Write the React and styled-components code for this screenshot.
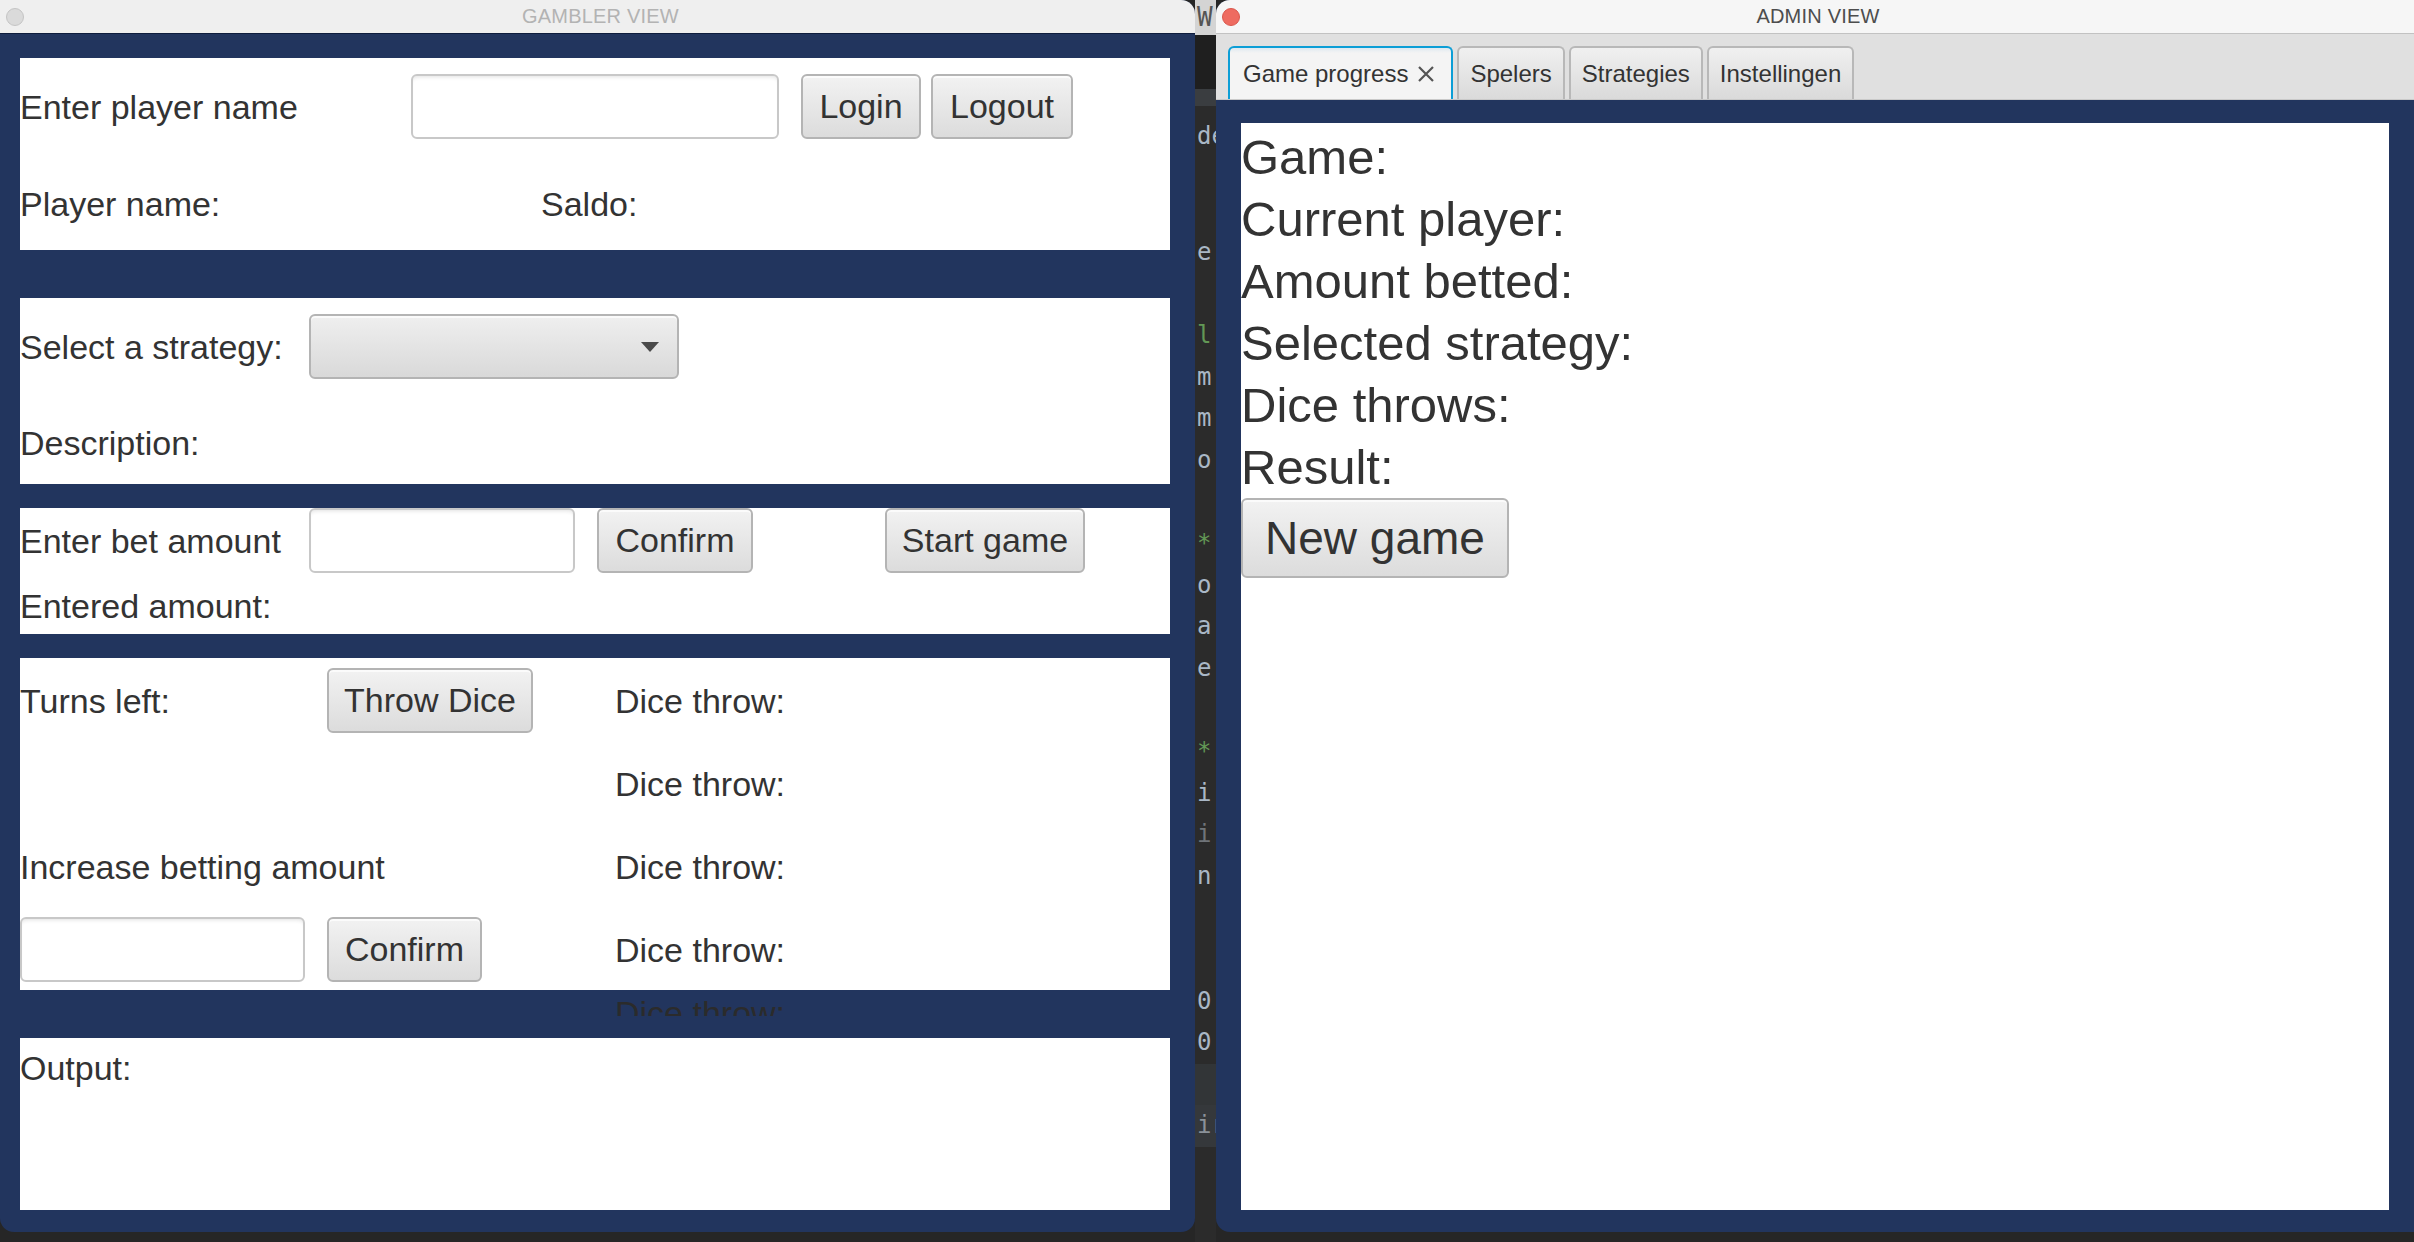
import styled, { createGlobalStyle } from "styled-components";

const NAVY = "#22355e";

const GlobalStyle = createGlobalStyle`
  html, body {
    margin: 0;
    padding: 0;
    background: #2b2b2b;
    overflow: hidden;
  }
  * {
    box-sizing: border-box;
  }
`;

const Screen = styled.div`
  display: flex;
  align-items: flex-start;
  width: 2414px;
  height: 1242px;
  background: #262626;
  font-family: "Liberation Sans", Arial, sans-serif;
  color: #333;
`;

const Window = styled.div`
  display: flex;
  flex-direction: column;
  height: 1232px;
  background: ${NAVY};
  overflow: hidden;
  flex: ${({ $grow }) => ($grow ? "1" : "0 0 1195px")};
  border-radius: ${({ $grow }) => ($grow ? "14px 0 0 14px" : "0 14px 14px 14px")};
`;

const TitleBar = styled.div`
  display: grid;
  grid-template-columns: 1fr auto 1fr;
  align-items: center;
  height: 34px;
  padding-left: 6px;
  flex-shrink: 0;
  background: ${({ $active }) => ($active ? "#f6f6f6" : "#efefef")};
  border-bottom: 1px solid ${({ $active }) => ($active ? "#c2c2c2" : "#0f1d3d")};
`;

const Light = styled.span`
  width: 18px;
  height: 18px;
  border-radius: 50%;
  justify-self: start;
  background: ${({ $active }) => ($active ? "#ee6b60" : "#dadada")};
  border: 1px solid ${({ $active }) => ($active ? "#d9574c" : "#c4c4c4")};
`;

const Title = styled.span`
  font-size: 20px;
  letter-spacing: 0.2px;
  color: ${({ $active }) => ($active ? "#4d4d4d" : "#b3b3b3")};
`;

/* ---------- gambler side ---------- */

const GamblerBody = styled.div`
  display: flex;
  flex-direction: column;
  padding: 24px 25px 22px 20px;
`;

const Panel = styled.div`
  background: #fff;
  height: ${({ $h }) => $h}px;
  padding-top: ${({ $pt }) => $pt || 0}px;
  margin-bottom: ${({ $mb }) => $mb || 0}px;
`;

const Row = styled.div`
  display: flex;
  align-items: center;
  height: ${({ $h }) => $h || 65}px;
  margin-top: ${({ $mt }) => $mt || 0}px;
`;

const Label = styled.span`
  font-size: 34px;
  line-height: 40px;
  white-space: nowrap;
  flex-shrink: 0;
  width: ${({ $w }) => ($w ? `${$w}px` : "auto")};
`;

const TextField = styled.div`
  width: ${({ $w }) => $w}px;
  height: 65px;
  flex-shrink: 0;
  background: #fff;
  border: 2px solid #c8c8c8;
  border-radius: 6px;
  box-shadow: inset 0 4px 4px -3px rgba(0, 0, 0, 0.12);
`;

const Button = styled.button`
  width: ${({ $w }) => $w}px;
  height: ${({ $hgt }) => $hgt || 65}px;
  margin-left: ${({ $ml }) => $ml || 0}px;
  flex-shrink: 0;
  padding: 0;
  font-family: "Liberation Sans", Arial, sans-serif;
  font-size: ${({ $fs }) => $fs || 34}px;
  color: #333;
  background: linear-gradient(#f2f2f2, #dcdcdc);
  border: 2px solid #b4b4b4;
  border-radius: 6px;
  box-shadow: inset 0 2px 0 rgba(255, 255, 255, 0.7);
`;

const Combo = styled.div`
  display: flex;
  align-items: center;
  justify-content: flex-end;
  width: 370px;
  height: 65px;
  padding-right: 18px;
  background: linear-gradient(#efefef, #d9d9d9);
  border: 2px solid #b4b4b4;
  border-radius: 6px;
  box-shadow: inset 0 2px 0 rgba(255, 255, 255, 0.7);
`;

const Arrow = styled.span`
  width: 0;
  height: 0;
  border-left: 9px solid transparent;
  border-right: 9px solid transparent;
  border-top: 10px solid #4a4a4a;
`;

const DiceGrid = styled.div`
  display: grid;
  grid-template-columns: 307px 288px 1fr;
  grid-template-rows: repeat(4, 65px);
  row-gap: 18px;
  align-items: center;
  justify-items: start;
`;

const Span2 = styled(Label)`
  grid-column: 1 / 3;
`;

const GapLine = styled.div`
  height: 48px;
`;

const Clipped = styled.div`
  margin-left: 595px;
  height: 26px;
  padding-top: 3px;
  overflow: hidden;
  font-size: 34px;
  line-height: 40px;
  color: #2b2b2b;
`;

/* ---------- editor strip between windows ---------- */

const Strip = styled.div`
  flex: 0 0 21px;
  height: 1242px;
  display: flex;
  flex-direction: column;
  background: #2b2b2b;
  overflow: hidden;
  font-family: "DejaVu Sans Mono", "Liberation Mono", monospace;
  font-size: 24px;
`;

const StripTop = styled.div`
  height: 35px;
  padding-left: 2px;
  background: #d4d4d4;
  color: #555;
  line-height: 35px;
  font-size: 26px;
`;

const StripBand = styled.div`
  height: ${({ $h }) => $h}px;
  background: ${({ $bg }) => $bg};
`;

const CodeLine = styled.div`
  height: ${({ $h }) => $h || 41.6}px;
  line-height: ${({ $h }) => $h || 41.6}px;
  padding-left: 2px;
  white-space: nowrap;
  color: ${({ $c }) => $c || "#a9b7c6"};
  background: ${({ $bg }) => $bg || "transparent"};
`;

/* ---------- admin side ---------- */

const TabBar = styled.div`
  display: flex;
  align-items: flex-end;
  gap: 4px;
  height: 66px;
  padding-left: 12px;
  flex-shrink: 0;
  background: #e0e0e0;
  border-bottom: 1px solid #c9c9c9;
`;

const Tab = styled.div`
  display: flex;
  align-items: center;
  gap: 9px;
  height: 53px;
  padding: 0 ${({ $selected }) => ($selected ? "16px 0 13px" : "11px")};
  font-size: 24px;
  color: #333;
  border-radius: 6px 6px 0 0;
  border: 2px solid ${({ $selected }) => ($selected ? "#0c9ed6" : "#b8b8b8")};
  border-bottom: none;
  background: ${({ $selected }) =>
    $selected ? "linear-gradient(#dfe9f0 0, #f4f4f4 5px)" : "linear-gradient(#f0f0f0, #dadada)"};
`;

const Close = styled.svg`
  width: 18px;
  height: 18px;
`;

const AdminBody = styled.div`
  flex: 1;
  display: flex;
  padding: 23px 25px 22px 25px;
`;

const Sheet = styled.div`
  flex: 1;
  background: #fff;
  padding-top: 3px;
`;

const BigLine = styled.div`
  font-size: 49px;
  line-height: 62px;
`;

const dice = ["Dice throw:", "Dice throw:", "Dice throw:", "Dice throw:"];

const codeLines = [
  ["e"], [""], ["l", "#629755"], ["m"], ["m"], ["o"], [""],
  ["*", "#629755"], ["o"], ["a"], ["e"], [""], ["*", "#629755"], ["i"], ["i", "#6f7479"],
  ["n"], [""], [""], ["0"], ["0"], ["", null, "#323537"], ["ir", "#8a9199", "#35383b"],
];

export default function App() {
  return (
    <>
      <GlobalStyle />
      <Screen>
        <Window>
          <TitleBar>
            <Light />
            <Title>GAMBLER VIEW</Title>
          </TitleBar>
          <GamblerBody>
            <Panel $h={192} $pt={16} $mb={48}>
              <Row>
                <Label $w={391}>Enter player name</Label>
                <TextField $w={368} />
                <Button $w={120} $ml={22}>Login</Button>
                <Button $w={142} $ml={10}>Logout</Button>
              </Row>
              <Row $mt={32}>
                <Label $w={521}>Player name:</Label>
                <Label>Saldo:</Label>
              </Row>
            </Panel>

            <Panel $h={186} $pt={16} $mb={24}>
              <Row>
                <Label $w={289}>Select a strategy:</Label>
                <Combo>
                  <Arrow />
                </Combo>
              </Row>
              <Row $mt={31}>
                <Label>Description:</Label>
              </Row>
            </Panel>

            <Panel $h={126} $mb={24}>
              <Row>
                <Label $w={289}>Enter bet amount</Label>
                <TextField $w={266} />
                <Button $w={156} $ml={22}>Confirm</Button>
                <Button $w={200} $ml={132}>Start game</Button>
              </Row>
              <Row $h={40} $mt={13}>
                <Label>Entered amount:</Label>
              </Row>
            </Panel>

            <Panel $h={332} $pt={10}>
              <DiceGrid>
                <Label>Turns left:</Label>
                <Button $w={206}>Throw Dice</Button>
                <Label>{dice[0]}</Label>

                <span />
                <span />
                <Label>{dice[1]}</Label>

                <Span2>Increase betting amount</Span2>
                <Label>{dice[2]}</Label>

                <TextField $w={285} />
                <Button $w={155}>Confirm</Button>
                <Label>{dice[3]}</Label>
              </DiceGrid>
            </Panel>

            <GapLine>
              <Clipped>Dice throw:</Clipped>
            </GapLine>

            <Panel $h={172} $pt={10}>
              <Label>Output:</Label>
            </Panel>
          </GamblerBody>
        </Window>

        <Strip>
          <StripTop>W</StripTop>
          <StripBand $h={54} $bg="#1f1f1f" />
          <StripBand $h={17} $bg="#3a3d40" />
          <CodeLine $h={60}>de</CodeLine>
          <CodeLine $h={66} />
          {codeLines.map(([text, color, bg], i) => (
            <CodeLine key={i} $c={color || undefined} $bg={bg}>
              {text}
            </CodeLine>
          ))}
        </Strip>

        <Window $grow>
          <TitleBar $active>
            <Light $active />
            <Title $active>ADMIN VIEW</Title>
          </TitleBar>
          <TabBar>
            <Tab $selected>
              Game progress
              <Close viewBox="0 0 18 18">
                <path d="M2 2 L16 16 M16 2 L2 16" stroke="#555" strokeWidth="2.2" fill="none" />
              </Close>
            </Tab>
            <Tab>Spelers</Tab>
            <Tab>Strategies</Tab>
            <Tab>Instellingen</Tab>
          </TabBar>
          <AdminBody>
            <Sheet>
              <BigLine>Game:</BigLine>
              <BigLine>Current player:</BigLine>
              <BigLine>Amount betted:</BigLine>
              <BigLine>Selected strategy:</BigLine>
              <BigLine>Dice throws:</BigLine>
              <BigLine>Result:</BigLine>
              <Button $w={268} $hgt={80} $fs={46}>New game</Button>
            </Sheet>
          </AdminBody>
        </Window>
      </Screen>
    </>
  );
}
